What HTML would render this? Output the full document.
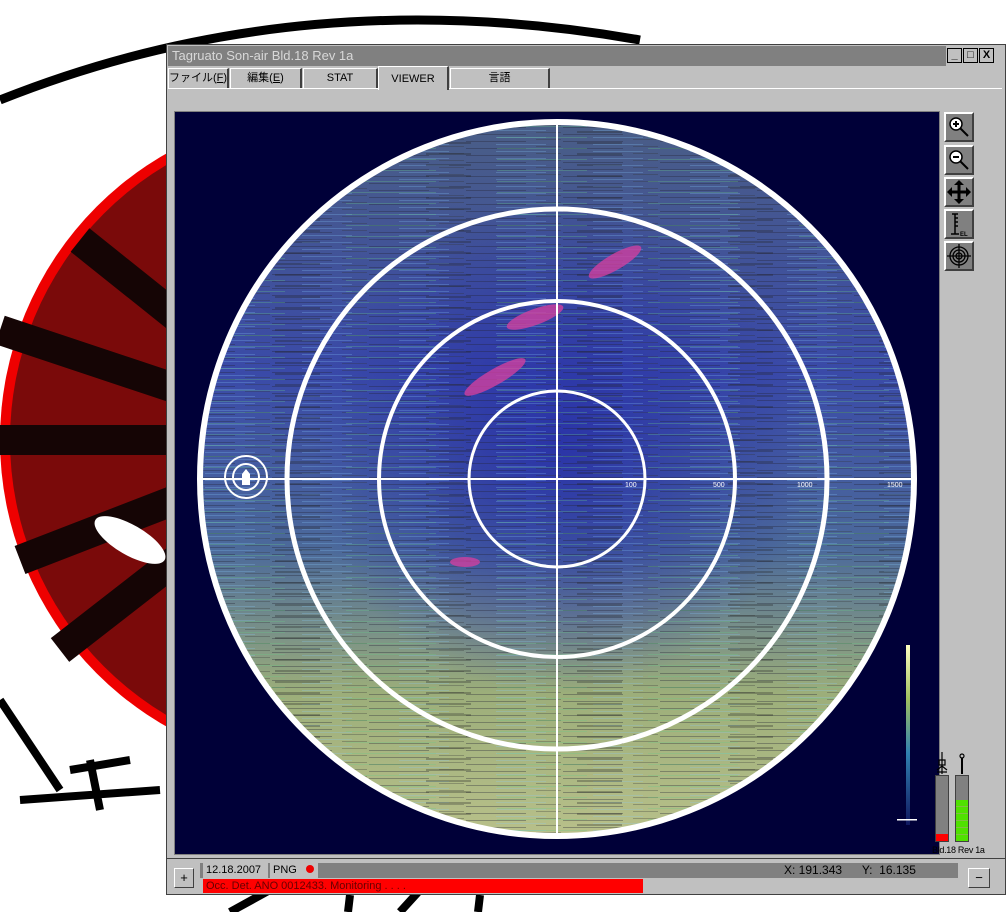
<!DOCTYPE html>
<html><head><meta charset="utf-8"><style>
*{margin:0;padding:0;box-sizing:border-box}
body{width:1008px;height:912px;overflow:hidden;background:#fff;position:relative;font-family:"Liberation Sans","Noto Sans CJK JP",sans-serif}
.abs{position:absolute}
.win{left:166px;top:44px;width:840px;height:851px;background:#c0c0c0;border:1px solid #404040}
.title{left:168px;top:46px;width:778px;height:20px;background:#808080;color:#d8d8d8;font-size:13px;line-height:20px;padding-left:4px}
.wb{top:48px;width:15px;height:15px;background:#c0c0c0;border:1px solid #000;font-size:11px;line-height:13px;text-align:center;font-weight:bold}
.tab{top:68px;height:20px;border:1px solid #fff;border-right:2px solid #404040;border-bottom:none;font-size:11px;line-height:19px;text-align:center;background:#c0c0c0;white-space:nowrap;overflow:hidden}
.radar{left:174px;top:111px;width:766px;height:744px;background:#000038;border:1px solid #808080;overflow:hidden}
.tool{left:944px;width:30px;height:30px;background:#808080;border:2px solid #fff;border-right-color:#404040;border-bottom-color:#404040}
</style></head><body>
<svg class="abs" style="left:0;top:0" width="1008" height="912">
<circle cx="330" cy="440" r="330" fill="#e00"/>
<circle cx="330" cy="440" r="320" fill="#7a0a0a"/>
<g stroke="#150505" stroke-width="30">
<line x1="330" y1="440" x2="0" y2="330"/><line x1="330" y1="440" x2="0" y2="440"/>
<line x1="330" y1="440" x2="20" y2="560"/><line x1="330" y1="440" x2="60" y2="650"/>
<line x1="330" y1="440" x2="80" y2="240"/></g>
<ellipse cx="130" cy="540" rx="40" ry="15" fill="#fff" transform="rotate(30 130 540)"/>
<path d="M0 100 Q300 -20 640 40" stroke="#000" stroke-width="9" fill="none"/>
<path d="M0 700 Q40 760 60 790" stroke="#000" stroke-width="8" fill="none"/>
<path d="M70 770 L130 760 M90 760 L100 810 M20 800 L160 790" stroke="#000" stroke-width="8" fill="none"/>
<path d="M270 890 L230 912 M350 895 L348 912 M420 890 L400 912 M480 895 L478 912" stroke="#000" stroke-width="8"/>
</svg>
<div class="abs win"></div>
<div class="abs title">Tagruato Son-air Bld.18 Rev 1a</div>
<div class="abs wb" style="left:947px">_</div><div class="abs wb" style="left:963px">□</div><div class="abs wb" style="left:979px">X</div>
<div class="abs tab" style="left:168px;width:61px">ファイル(<u>F</u>)</div>
<div class="abs tab" style="left:230px;width:72px">編集(<u>E</u>)</div>
<div class="abs tab" style="left:303px;width:75px">STAT</div>
<div class="abs tab" style="left:378px;width:71px;top:66px;height:24px;z-index:2;line-height:24px">VIEWER</div>
<div class="abs tab" style="left:450px;width:100px">言語</div>
<div class="abs" style="left:168px;top:88px;width:834px;height:770px;border-top:1px solid #fff"></div>
<div class="abs radar">
<svg width="766" height="744">
<defs>
<linearGradient id="g" x1="0" y1="0" x2="0" y2="1">
<stop offset="0" stop-color="#4a5e86"/><stop offset="0.35" stop-color="#3a4aa8"/><stop offset="0.6" stop-color="#4c6a9a"/><stop offset="0.8" stop-color="#9cae7a"/><stop offset="1" stop-color="#b8c08a"/></linearGradient>
<radialGradient id="c" cx="0.5" cy="0.45" r="0.35"><stop offset="0" stop-color="#2830a8" stop-opacity=".9"/><stop offset="1" stop-color="#2830a8" stop-opacity="0"/></radialGradient>
<pattern id="s" width="97" height="7" patternUnits="userSpaceOnUse"><rect y="1" width="60" height="1" fill="#223" opacity=".35"/><rect x="30" y="4" width="50" height="1" fill="#8cf" opacity=".25"/><rect x="70" y="6" width="25" height="1" fill="#333" opacity=".3"/></pattern>
<pattern id="s2" width="151" height="11" patternUnits="userSpaceOnUse"><rect x="20" y="3" width="90" height="1" fill="#6c8" opacity=".3"/><rect x="100" y="8" width="45" height="2" fill="#222" opacity=".3"/></pattern>
</defs>
<circle cx="382" cy="367" r="357" fill="url(#g)"/>
<circle cx="382" cy="367" r="357" fill="url(#c)"/>
<circle cx="382" cy="367" r="357" fill="url(#s)"/>
<circle cx="382" cy="367" r="357" fill="url(#s2)"/>
<g fill="#d040a0" opacity=".8"><ellipse cx="440" cy="150" rx="30" ry="8" transform="rotate(-30 440 150)"/><ellipse cx="360" cy="205" rx="30" ry="8" transform="rotate(-20 360 205)"/><ellipse cx="320" cy="265" rx="35" ry="8" transform="rotate(-30 320 265)"/><ellipse cx="290" cy="450" rx="15" ry="5"/></g>
<g fill="none" stroke="#fff"><circle cx="382" cy="367" r="357" stroke-width="6"/><circle cx="382" cy="367" r="270" stroke-width="5"/><circle cx="382" cy="367" r="178" stroke-width="4"/><circle cx="382" cy="367" r="88" stroke-width="3"/>
<line x1="382" y1="10" x2="382" y2="724" stroke-width="2"/><line x1="25" y1="367" x2="739" y2="367" stroke-width="2"/>
<circle cx="71" cy="365" r="21" stroke-width="2"/><circle cx="71" cy="365" r="13" stroke-width="2"/></g>
<path d="M67 373 V362 L71 357 L75 362 V373 Z" fill="#fff"/>
<g fill="#fff" font-size="7"><text x="450" y="375">100</text><text x="538" y="375">500</text><text x="622" y="375">1000</text><text x="712" y="375">1500</text></g>
<defs><linearGradient id="b" x1="0" y1="0" x2="0" y2="1"><stop offset="0" stop-color="#ffffc0"/><stop offset=".3" stop-color="#a0c060"/><stop offset=".6" stop-color="#3080b0"/><stop offset="1" stop-color="#101860"/></linearGradient></defs>
<rect x="731" y="533" width="4" height="180" fill="url(#b)"/><rect x="722" y="707" width="20" height="1.5" fill="#fff"/>
</svg></div>
<div class="abs tool" style="top:112px"><svg width="26" height="26"><circle cx="10" cy="10" r="6" fill="#fff" stroke="#000" stroke-width="1.5"/><path d="M7 10h6M10 7v6M14 14l8 8" stroke="#000" stroke-width="2"/></svg></div>
<div class="abs tool" style="top:145px"><svg width="26" height="26"><circle cx="10" cy="10" r="6" fill="#fff" stroke="#000" stroke-width="1.5"/><path d="M7 10h6M14 14l8 8" stroke="#000" stroke-width="2"/></svg></div>
<div class="abs tool" style="top:177px"><svg width="26" height="26"><path d="M13 3v20M3 13h20" stroke="#000" stroke-width="3"/><path d="M13 1l5 5h-10zM13 25l5-5h-10zM1 13l5 5v-10zM25 13l-5 5v-10z"/></svg></div>
<div class="abs tool" style="top:209px"><svg width="26" height="26"><path d="M9 3v20M6 3h6M9 7h3M9 11h3M9 15h3M5 23h8" stroke="#000" stroke-width="1.5"/><text x="14" y="25" font-size="6" font-weight="bold">EL</text></svg></div>
<div class="abs tool" style="top:241px"><svg width="26" height="26" fill="none" stroke="#000" stroke-width="1.3"><circle cx="13" cy="13" r="9"/><circle cx="13" cy="13" r="6"/><circle cx="13" cy="13" r="3"/><path d="M13 1v24M1 13h24"/></svg></div>
<svg class="abs" style="left:935px;top:752px" width="40" height="22" stroke="#000" fill="none" stroke-width="1.2"><path d="M7 0v22M4 8h6v5h-6zM2 18l5-4 5 4M2 20h10"/><circle cx="27" cy="4" r="2"/><path d="M27 6v16" stroke-width="2"/></svg>
<div class="abs" style="left:935px;top:775px;width:14px;height:67px;background:#808080;border:1px solid #404040"><div class="abs" style="bottom:0;left:0;width:12px;height:7px;background:#f00"></div></div>
<div class="abs" style="left:955px;top:775px;width:14px;height:67px;background:#808080;border:1px solid #404040"><div class="abs" style="bottom:0;left:0;width:12px;height:41px;background:repeating-linear-gradient(#50e000 0 6px,#80c040 6px 7px)"></div></div>
<div class="abs" style="left:932px;top:845px;font-size:9px;white-space:nowrap;letter-spacing:-.3px">Bld.18 Rev 1a</div>
<div class="abs" style="left:166px;top:858px;width:840px;height:1px;background:#404040"></div>
<div class="abs" style="left:174px;top:868px;width:20px;height:20px;border:1px solid #fff;border-right-color:#404040;border-bottom-color:#404040;text-align:center;font-size:13px;line-height:17px">+</div>
<div class="abs" style="left:968px;top:868px;width:22px;height:20px;border:1px solid #fff;border-right-color:#404040;border-bottom-color:#404040;text-align:center;font-size:13px;line-height:17px">−</div>
<div class="abs" style="left:200px;top:863px;width:758px;height:15px;background:#808080"></div>
<div class="abs" style="left:203px;top:863px;width:65px;height:15px;background:#c0c0c0;font-size:11px;line-height:15px;padding-left:3px">12.18.2007</div>
<div class="abs" style="left:270px;top:863px;width:48px;height:15px;background:#c0c0c0;font-size:11px;line-height:15px;padding-left:3px">PNG <span style="display:inline-block;width:8px;height:8px;border-radius:50%;background:#e00;margin-left:6px"></span></div>
<div class="abs" style="left:784px;top:863px;font-size:12px;line-height:15px">X: 191.343 &nbsp;&nbsp;&nbsp;&nbsp; Y: &nbsp;16.135</div>
<div class="abs" style="left:203px;top:879px;width:440px;height:14px;background:#f00;font-size:11px;line-height:14px;padding-left:3px;color:#600">Occ. Det. ANO 0012433. Monitoring . . . .</div>
</body></html>
